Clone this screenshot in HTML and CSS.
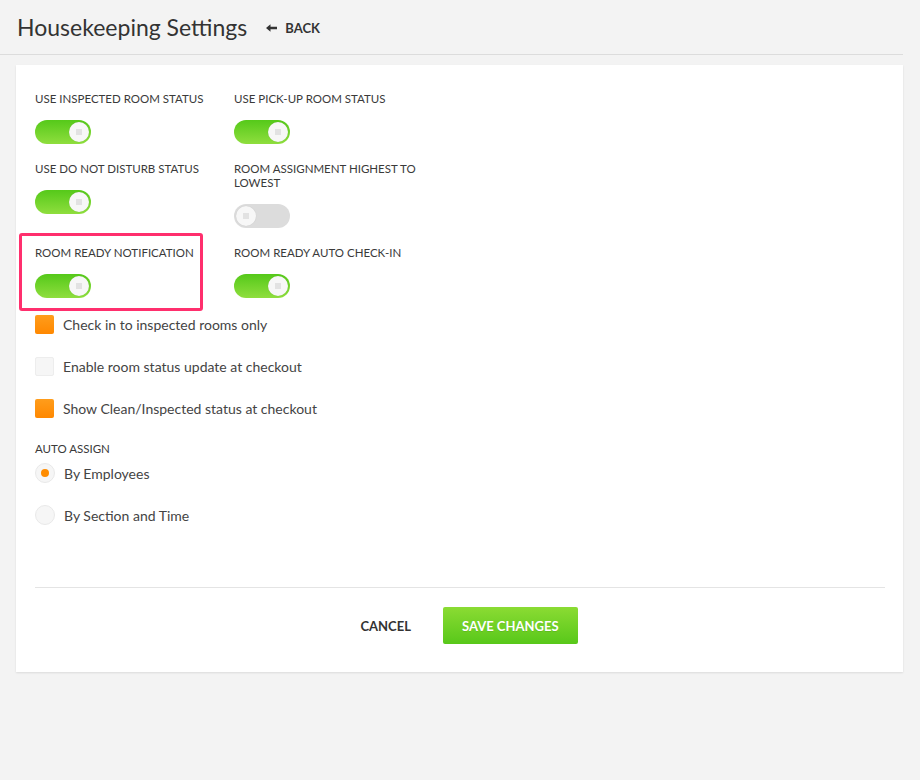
FILE: index.html
```html
<!DOCTYPE html>
<html lang="en">
<head>
    <meta charset="UTF-8">
    <title>Housekeeping Settings</title>
    <link rel="stylesheet" href="styles.css">
</head>
<body>
    <header class="page-header">
        <h1>Housekeeping Settings</h1>
        <a class="back-link" href="#">
            <svg width="11" height="8" viewBox="0 0 11 8"><path d="M0 4 L4.5 0.3 V2.7 H11 V5.3 H4.5 V7.7 Z" fill="#333"/></svg>
            BACK
        </a>
    </header>

    <main class="card">
        <div class="toggle-grid">
            <div class="toggle-cell">
                <div class="toggle-label">Use inspected room status</div>
                <button class="toggle on"><span class="knob"></span></button>
            </div>
            <div class="toggle-cell">
                <div class="toggle-label">Use pick-up room status</div>
                <button class="toggle on"><span class="knob"></span></button>
            </div>
            <div class="toggle-cell">
                <div class="toggle-label">Use do not disturb status</div>
                <button class="toggle on"><span class="knob"></span></button>
            </div>
            <div class="toggle-cell">
                <div class="toggle-label">Room assignment highest to lowest</div>
                <button class="toggle"><span class="knob"></span></button>
            </div>
            <div class="toggle-cell highlighted">
                <div class="toggle-label">Room ready notification</div>
                <button class="toggle on"><span class="knob"></span></button>
            </div>
            <div class="toggle-cell">
                <div class="toggle-label">Room ready auto check-in</div>
                <button class="toggle on"><span class="knob"></span></button>
            </div>
        </div>

        <div class="check-list">
            <label class="check-row"><span class="checkbox checked"></span>Check in to inspected rooms only</label>
            <label class="check-row"><span class="checkbox"></span>Enable room status update at checkout</label>
            <label class="check-row"><span class="checkbox checked"></span>Show Clean/Inspected status at checkout</label>
        </div>

        <div class="section-label">Auto assign</div>
        <div class="radio-list">
            <label class="check-row"><span class="radio selected"></span>By Employees</label>
            <label class="check-row"><span class="radio"></span>By Section and Time</label>
        </div>

        <div class="actions">
            <button class="btn-cancel">Cancel</button>
            <button class="btn-save">Save Changes</button>
        </div>
    </main>
</body>
</html>
```

FILE: styles.css
```css
body {
    margin: 0;
    background: #f3f3f3;
    font-family: 'Lato', 'Liberation Sans', sans-serif;
    color: #333;
    min-height: 780px;
}

.page-header {
    display: flex;
    align-items: center;
    height: 54px;
    margin-right: 17px;
    padding-left: 17px;
    border-bottom: 1px solid #dcdcdc;
}

.page-header h1 {
    margin: 0;
    font-size: 23px;
    font-weight: 400;
    color: #333;
}

.back-link {
    display: flex;
    align-items: center;
    gap: 8px;
    margin-left: 19px;
    margin-top: 2px;
    font-size: 13px;
    font-weight: 700;
    color: #333;
    text-decoration: none;
}

.card {
    margin: 10px 17px 0 16px;
    padding: 27px 18px 28px 19px;
    background: #fff;
    box-shadow: 0 1px 2px rgba(0, 0, 0, 0.1);
}

.toggle-grid {
    display: grid;
    grid-template-columns: 199px 190px;
    row-gap: 18px;
}

.toggle-cell {
    position: relative;
}

.toggle-label {
    font-size: 11.5px;
    line-height: 14px;
    text-transform: uppercase;
    color: #3a3a3a;
    margin-bottom: 14px;
}

.highlighted::after {
    content: '';
    position: absolute;
    top: -13px;
    left: -16px;
    width: 178px;
    height: 72px;
    border: 3px solid #ff2f6d;
    border-radius: 3px;
}

.toggle {
    position: relative;
    display: block;
    width: 56px;
    height: 24px;
    padding: 0;
    border: none;
    border-radius: 12px;
    background: #dcdcdc;
    cursor: pointer;
}

.toggle.on {
    background: linear-gradient(180deg, #55c91a, #8fde3e);
}

.knob {
    position: absolute;
    top: 2px;
    left: 2px;
    width: 20px;
    height: 20px;
    border-radius: 50%;
    background: #f7f7f7;
    box-shadow: 0 0 1px rgba(0, 0, 0, 0.15);
}

.toggle.on .knob {
    left: 34px;
}

.knob::after {
    content: '';
    position: absolute;
    top: 7px;
    left: 7px;
    width: 6px;
    height: 6px;
    background: #e2e2e2;
}

.check-list {
    display: flex;
    flex-direction: column;
    gap: 22px;
    margin-top: 16px;
}

.check-row {
    display: flex;
    align-items: center;
    gap: 9px;
    height: 20px;
    font-size: 14px;
    color: #444;
}

.checkbox {
    width: 19px;
    height: 19px;
    border-radius: 2px;
    background: #f6f6f6;
    border: 1px solid #ededed;
    box-sizing: border-box;
}

.checkbox.checked {
    border: none;
    background: linear-gradient(180deg, #ff9d1c, #ff8800);
}

.section-label {
    margin-top: 24px;
    font-size: 11.5px;
    line-height: 14px;
    text-transform: uppercase;
    color: #3a3a3a;
}

.radio-list {
    display: flex;
    flex-direction: column;
    gap: 22px;
    margin-top: 7px;
}

.radio {
    position: relative;
    width: 20px;
    height: 20px;
    border-radius: 50%;
    background: #f6f6f6;
    border: 1px solid #e9e9e9;
    box-sizing: border-box;
}

.radio.selected::after {
    content: '';
    position: absolute;
    top: 5px;
    left: 5px;
    width: 8px;
    height: 8px;
    border-radius: 50%;
    background: #ff8c00;
}

.actions {
    display: flex;
    justify-content: center;
    gap: 14px;
    margin-top: 62px;
    padding-top: 19px;
    border-top: 1px solid #e4e4e4;
}

.actions button {
    height: 37px;
    border: none;
    font-family: inherit;
    font-size: 13px;
    font-weight: 700;
    text-transform: uppercase;
    cursor: pointer;
}

.btn-cancel {
    padding: 0 18px;
    background: none;
    color: #333;
}

.btn-save {
    padding: 0 19px;
    border-radius: 2px;
    color: #fff;
    background: linear-gradient(180deg, #8bdb33, #58c81a);
    text-shadow: 0 1px 0 rgba(0, 0, 0, 0.1);
}
```
